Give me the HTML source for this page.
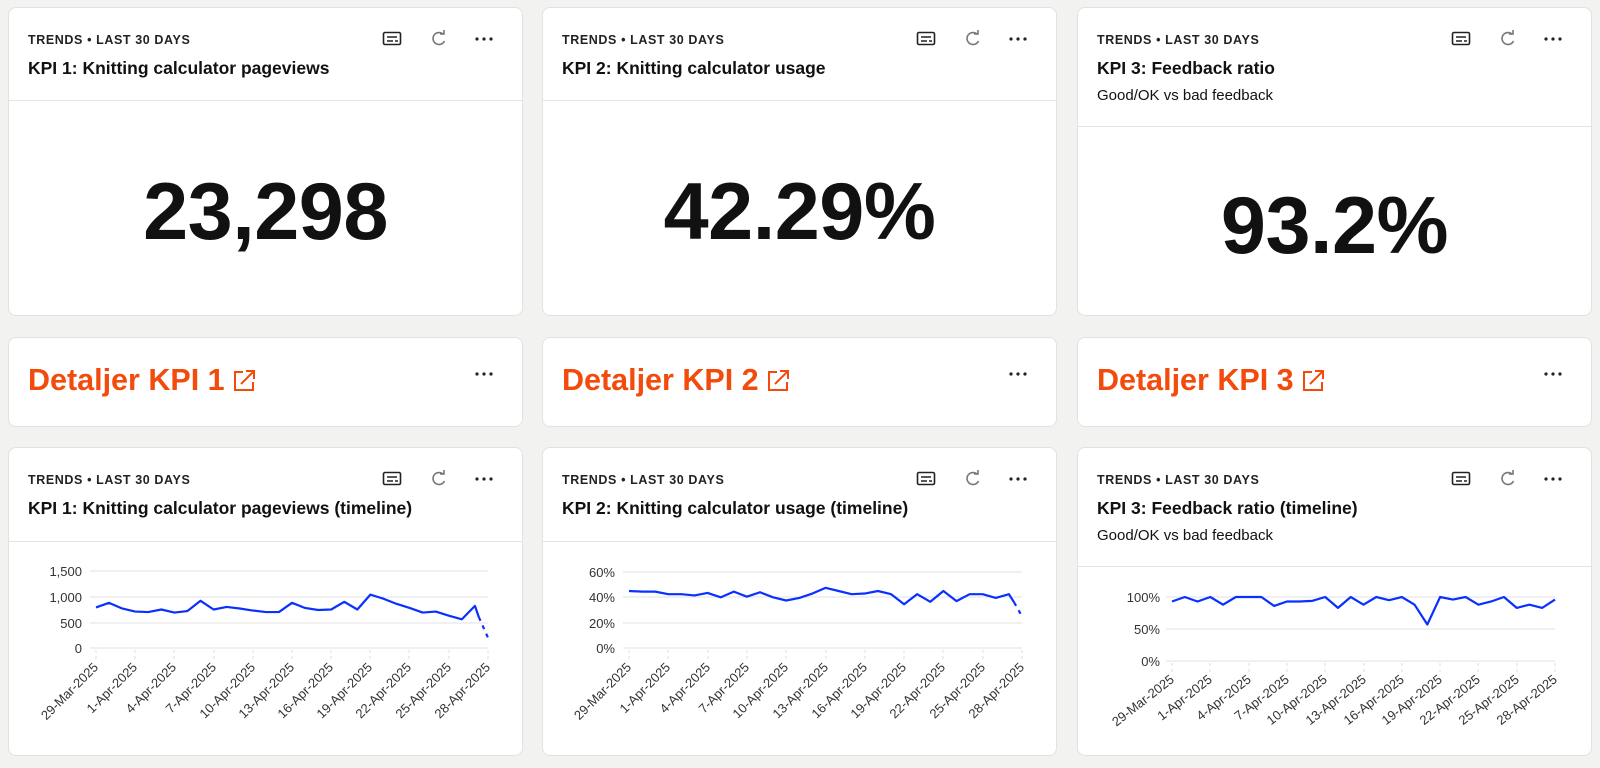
<!DOCTYPE html>
<html><head><meta charset="utf-8"><style>
*{box-sizing:border-box;margin:0;padding:0}
body{width:1600px;height:768px;background:#f2f2f0;font-family:"Liberation Sans",Arial,sans-serif;position:relative;overflow:hidden;color:#111}
.card{position:absolute;background:#fff;border:1px solid #e2e2e0;border-radius:8px;overflow:hidden}
.lbl{position:absolute;left:19px;font-size:12.5px;font-weight:bold;letter-spacing:.6px;color:#222}
.ttl{position:absolute;left:19px;font-size:17.5px;font-weight:bold;color:#111}
.sub{position:absolute;left:19px;font-size:15px;color:#111}
.div{position:absolute;left:0;right:0;height:1px;background:#e4e4e2}
.big{position:absolute;left:0;right:0;text-align:center;font-size:81px;font-weight:bold;color:#111;letter-spacing:-.5px}
.det{position:absolute;left:19px;top:25px;font-size:30.5px;font-weight:bold;color:#f24b0c}
svg text{font-family:"Liberation Sans",Arial,sans-serif}
</style></head><body>

<div class="card" style="left:8px;top:7px;width:515px;height:309px">
 <div class="lbl" style="top:25px">TRENDS • LAST 30 DAYS</div>
 <div class="ttl" style="top:50px">KPI 1: Knitting calculator pageviews</div>
 <div class="div" style="top:92px"></div>
 <div class="big" style="top:158px">23,298</div>
</div>
<div class="card" style="left:542px;top:7px;width:515px;height:309px">
 <div class="lbl" style="top:25px">TRENDS • LAST 30 DAYS</div>
 <div class="ttl" style="top:50px">KPI 2: Knitting calculator usage</div>
 <div class="div" style="top:92px"></div>
 <div class="big" style="top:158px">42.29%</div>
</div>
<div class="card" style="left:1077px;top:7px;width:515px;height:309px">
 <div class="lbl" style="top:25px">TRENDS • LAST 30 DAYS</div>
 <div class="ttl" style="top:50px">KPI 3: Feedback ratio</div>
 <div class="sub" style="top:79px">Good/OK vs bad feedback</div>
 <div class="div" style="top:118px"></div>
 <div class="big" style="top:172px">93.2%</div>
</div>

<div class="card" style="left:8px;top:337px;width:515px;height:90px">
 <div class="det">Detaljer KPI 1 <svg width="24" height="24" viewBox="0 0 24 24" style="vertical-align:-2px"><path d="M10 4H2v18h18v-8" fill="none" stroke="#f24b0c" stroke-width="2"/><path d="M8 16L21 3M13 3h8v8" fill="none" stroke="#f24b0c" stroke-width="2"/></svg></div>
</div>
<div class="card" style="left:542px;top:337px;width:515px;height:90px">
 <div class="det">Detaljer KPI 2 <svg width="24" height="24" viewBox="0 0 24 24" style="vertical-align:-2px"><path d="M10 4H2v18h18v-8" fill="none" stroke="#f24b0c" stroke-width="2"/><path d="M8 16L21 3M13 3h8v8" fill="none" stroke="#f24b0c" stroke-width="2"/></svg></div>
</div>
<div class="card" style="left:1077px;top:337px;width:515px;height:90px">
 <div class="det">Detaljer KPI 3 <svg width="24" height="24" viewBox="0 0 24 24" style="vertical-align:-2px"><path d="M10 4H2v18h18v-8" fill="none" stroke="#f24b0c" stroke-width="2"/><path d="M8 16L21 3M13 3h8v8" fill="none" stroke="#f24b0c" stroke-width="2"/></svg></div>
</div>

<div class="card" style="left:8px;top:447px;width:515px;height:309px">
 <div class="lbl" style="top:25px">TRENDS • LAST 30 DAYS</div>
 <div class="ttl" style="top:50px">KPI 1: Knitting calculator pageviews (timeline)</div>
 <div class="div" style="top:93px"></div>
</div>
<div class="card" style="left:542px;top:447px;width:515px;height:309px">
 <div class="lbl" style="top:25px">TRENDS • LAST 30 DAYS</div>
 <div class="ttl" style="top:50px">KPI 2: Knitting calculator usage (timeline)</div>
 <div class="div" style="top:93px"></div>
</div>
<div class="card" style="left:1077px;top:447px;width:515px;height:309px">
 <div class="lbl" style="top:25px">TRENDS • LAST 30 DAYS</div>
 <div class="ttl" style="top:50px">KPI 3: Feedback ratio (timeline)</div>
 <div class="sub" style="top:79px">Good/OK vs bad feedback</div>
 <div class="div" style="top:118px"></div>
</div>

<svg width="1600" height="768" style="position:absolute;left:0;top:0" xmlns="http://www.w3.org/2000/svg">
 <defs>
  <g id="hdr">
   <rect x="-139.5" y="-6.5" width="17" height="12" rx="1.5" fill="none" stroke="#222" stroke-width="1.6"/>
   <path d="M-136 -2h10M-136 2h6M-128 2h3" stroke="#222" stroke-width="1.5"/>
   <path d="M-79.5 -4.5A6 6 0 1 0 -78.5 2" fill="none" stroke="#777" stroke-width="1.6"/>
   <path d="M-83 -5L-79 -5L-79 -9" fill="none" stroke="#777" stroke-width="1.6"/>
   <circle cx="-46" cy="0" r="1.6" fill="#222"/><circle cx="-39" cy="0" r="1.6" fill="#222"/><circle cx="-32" cy="0" r="1.6" fill="#222"/>
  </g>
  <g id="dots"><circle cx="-46" cy="0" r="1.6" fill="#222"/><circle cx="-39" cy="0" r="1.6" fill="#222"/><circle cx="-32" cy="0" r="1.6" fill="#222"/></g>
 </defs>
 <use href="#hdr" x="523" y="39"/><use href="#hdr" x="1057" y="39"/><use href="#hdr" x="1592" y="39"/>
 <use href="#hdr" x="523" y="479"/><use href="#hdr" x="1057" y="479"/><use href="#hdr" x="1592" y="479"/>
 <use href="#dots" x="523" y="374"/><use href="#dots" x="1057" y="374"/><use href="#dots" x="1592" y="374"/>

 <g font-size="13" fill="#333" stroke-width="1">
  <g stroke="#e2e2e2"><line x1="90" x2="488" y1="571" y2="571"/><line x1="90" x2="488" y1="597" y2="597"/><line x1="90" x2="488" y1="623" y2="623"/><line x1="90" x2="488" y1="648" y2="648"/></g>
  <text x="82" y="576" text-anchor="end">1,500</text><text x="82" y="602" text-anchor="end">1,000</text><text x="82" y="628" text-anchor="end">500</text><text x="82" y="653" text-anchor="end">0</text>
  <g stroke="#ddd" stroke-dasharray="3 3"><line x1="96" x2="96" y1="650" y2="662"/><line x1="135" x2="135" y1="650" y2="662"/><line x1="174" x2="174" y1="650" y2="662"/><line x1="214" x2="214" y1="650" y2="662"/><line x1="253" x2="253" y1="650" y2="662"/><line x1="292" x2="292" y1="650" y2="662"/><line x1="331" x2="331" y1="650" y2="662"/><line x1="370" x2="370" y1="650" y2="662"/><line x1="409" x2="409" y1="650" y2="662"/><line x1="449" x2="449" y1="650" y2="662"/><line x1="488" x2="488" y1="650" y2="662"/></g>
  <g text-anchor="end">
   <text transform="translate(99,668) rotate(-45)">29-Mar-2025</text><text transform="translate(138,668) rotate(-45)">1-Apr-2025</text><text transform="translate(177,668) rotate(-45)">4-Apr-2025</text><text transform="translate(217,668) rotate(-45)">7-Apr-2025</text><text transform="translate(256,668) rotate(-45)">10-Apr-2025</text><text transform="translate(295,668) rotate(-45)">13-Apr-2025</text><text transform="translate(334,668) rotate(-45)">16-Apr-2025</text><text transform="translate(373,668) rotate(-45)">19-Apr-2025</text><text transform="translate(412,668) rotate(-45)">22-Apr-2025</text><text transform="translate(452,668) rotate(-45)">25-Apr-2025</text><text transform="translate(491,668) rotate(-45)">28-Apr-2025</text>
  </g>
  <g transform="translate(96,648) scale(13.067,-0.05133)">
   <polyline vector-effect="non-scaling-stroke" fill="none" stroke="#0a30ff" stroke-width="2.2" stroke-linejoin="round" points="0,790 1,880 2,770 3,710 4,700 5,750 6,690 7,720 8,920 9,750 10,800 11,770 12,730 13,700 14,700 15,880 16,780 17,740 18,750 19,900 20,750 21,1040 22,960 23,860 24,780 25,690 26,710 27,630 28,560 29,820 29.3,600"/>
   <polyline vector-effect="non-scaling-stroke" fill="none" stroke="#0a30ff" stroke-width="2.2" stroke-dasharray="4 5" points="29.3,600 30,200"/>
  </g>
 </g>

 <g font-size="13" fill="#333">
  <g stroke="#e2e2e2"><line x1="623" x2="1022" y1="572" y2="572"/><line x1="623" x2="1022" y1="597" y2="597"/><line x1="623" x2="1022" y1="623" y2="623"/><line x1="623" x2="1022" y1="648" y2="648"/></g>
  <text x="615" y="577" text-anchor="end">60%</text><text x="615" y="602" text-anchor="end">40%</text><text x="615" y="628" text-anchor="end">20%</text><text x="615" y="653" text-anchor="end">0%</text>
  <g stroke="#ddd" stroke-dasharray="3 3"><line x1="629" x2="629" y1="650" y2="662"/><line x1="668" x2="668" y1="650" y2="662"/><line x1="708" x2="708" y1="650" y2="662"/><line x1="747" x2="747" y1="650" y2="662"/><line x1="786" x2="786" y1="650" y2="662"/><line x1="826" x2="826" y1="650" y2="662"/><line x1="865" x2="865" y1="650" y2="662"/><line x1="904" x2="904" y1="650" y2="662"/><line x1="943" x2="943" y1="650" y2="662"/><line x1="983" x2="983" y1="650" y2="662"/><line x1="1022" x2="1022" y1="650" y2="662"/></g>
  <g text-anchor="end">
   <text transform="translate(632,668) rotate(-45)">29-Mar-2025</text><text transform="translate(671,668) rotate(-45)">1-Apr-2025</text><text transform="translate(711,668) rotate(-45)">4-Apr-2025</text><text transform="translate(750,668) rotate(-45)">7-Apr-2025</text><text transform="translate(789,668) rotate(-45)">10-Apr-2025</text><text transform="translate(829,668) rotate(-45)">13-Apr-2025</text><text transform="translate(868,668) rotate(-45)">16-Apr-2025</text><text transform="translate(907,668) rotate(-45)">19-Apr-2025</text><text transform="translate(946,668) rotate(-45)">22-Apr-2025</text><text transform="translate(986,668) rotate(-45)">25-Apr-2025</text><text transform="translate(1025,668) rotate(-45)">28-Apr-2025</text>
  </g>
  <g transform="translate(629,648) scale(13.1,-1.2667)">
   <polyline vector-effect="non-scaling-stroke" fill="none" stroke="#0a30ff" stroke-width="2.2" stroke-linejoin="round" points="0,45 1,44.5 2,44.5 3,42.5 4,42.5 5,41.5 6,43.5 7,40 8,44.5 9,40.5 10,44 11,40 12,37.5 13,39.5 14,43 15,47.5 16,45 17,42.5 18,43 19,45 20,42.5 21,34.5 22,42.5 23,36.5 24,45 25,37 26,42.5 27,42.5 28,39.5 29,42.5 29.4,36"/>
   <polyline vector-effect="non-scaling-stroke" fill="none" stroke="#0a30ff" stroke-width="2.2" stroke-dasharray="4 5" points="29.4,36 30,25"/>
  </g>
 </g>

 <g font-size="13" fill="#333">
  <g stroke="#e2e2e2"><line x1="1166" x2="1555" y1="597" y2="597"/><line x1="1166" x2="1555" y1="629" y2="629"/><line x1="1166" x2="1555" y1="661" y2="661"/></g>
  <text x="1160" y="602" text-anchor="end">100%</text><text x="1160" y="634" text-anchor="end">50%</text><text x="1160" y="666" text-anchor="end">0%</text>
  <g stroke="#ddd" stroke-dasharray="3 3"><line x1="1172" x2="1172" y1="663" y2="673"/><line x1="1210" x2="1210" y1="663" y2="673"/><line x1="1249" x2="1249" y1="663" y2="673"/><line x1="1287" x2="1287" y1="663" y2="673"/><line x1="1325" x2="1325" y1="663" y2="673"/><line x1="1364" x2="1364" y1="663" y2="673"/><line x1="1402" x2="1402" y1="663" y2="673"/><line x1="1440" x2="1440" y1="663" y2="673"/><line x1="1478" x2="1478" y1="663" y2="673"/><line x1="1517" x2="1517" y1="663" y2="673"/><line x1="1555" x2="1555" y1="663" y2="673"/></g>
  <g text-anchor="end">
   <text transform="translate(1175,681) rotate(-38)">29-Mar-2025</text><text transform="translate(1213,681) rotate(-38)">1-Apr-2025</text><text transform="translate(1252,681) rotate(-38)">4-Apr-2025</text><text transform="translate(1290,681) rotate(-38)">7-Apr-2025</text><text transform="translate(1328,681) rotate(-38)">10-Apr-2025</text><text transform="translate(1367,681) rotate(-38)">13-Apr-2025</text><text transform="translate(1405,681) rotate(-38)">16-Apr-2025</text><text transform="translate(1443,681) rotate(-38)">19-Apr-2025</text><text transform="translate(1481,681) rotate(-38)">22-Apr-2025</text><text transform="translate(1520,681) rotate(-38)">25-Apr-2025</text><text transform="translate(1558,681) rotate(-38)">28-Apr-2025</text>
  </g>
  <g transform="translate(1172,661) scale(12.767,-0.64)">
   <polyline vector-effect="non-scaling-stroke" fill="none" stroke="#0a30ff" stroke-width="2.2" stroke-linejoin="round" points="0,93 1,100 2,93 3,100 4,88 5,100 6,100 7,100 8,86 9,93 10,93 11,94 12,100 13,83 14,100 15,88 16,100 17,95 18,100 19,88 20,57 21,100 22,96 23,100 24,88 25,93 26,100 27,83 28,88 29,83 30,96"/>
  </g>
 </g>
</svg>
</body></html>
